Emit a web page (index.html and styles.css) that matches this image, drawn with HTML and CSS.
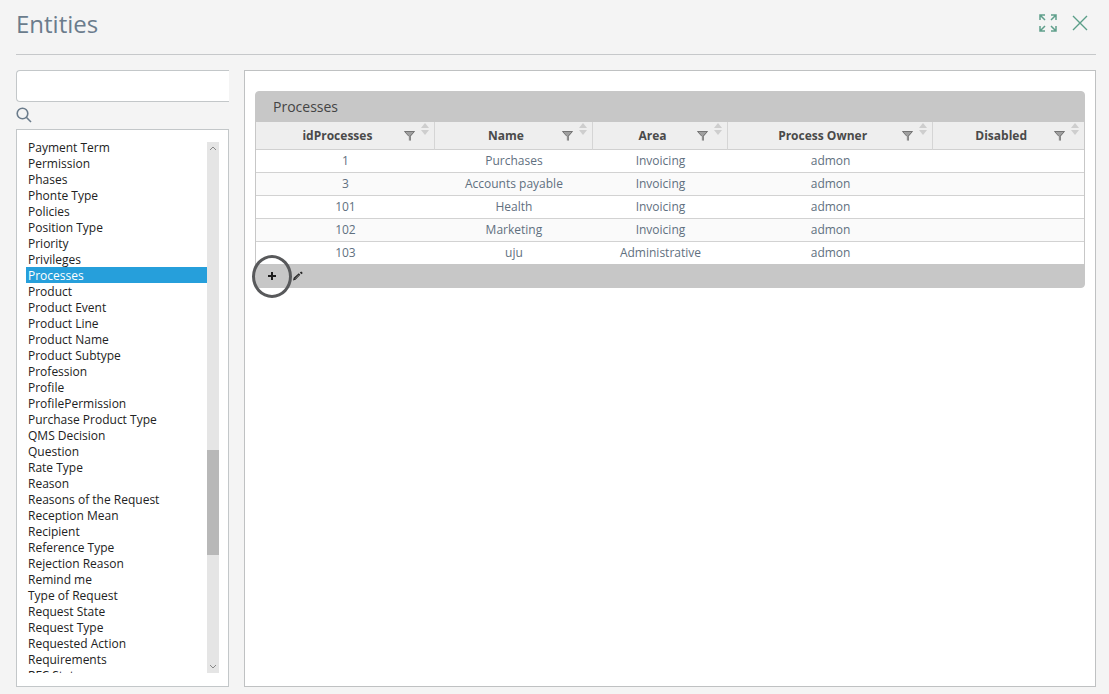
FILE: index.html
```html
<!DOCTYPE html>
<html lang="en">
<head>
<meta charset="utf-8">
<title>Entities</title>
<link rel="stylesheet" href="styles.css">
</head>
<body>
<svg class="sprite" aria-hidden="true">
  <symbol id="funnel" viewBox="0 0 11 10"><path d="M.5.5h10L6.8 5.2V9.5H4.8V5.2z" fill="#a0a0a0"/><path d="M.5.5h10L6.2 5.2V9.5M.5.5l4.300 4.700" fill="none" stroke="#6c6c6c" stroke-width=".9"/></symbol>
  <symbol id="sort" viewBox="0 0 8 12"><path d="M4 0l4 5H0zM4 12l4-5H0z" fill="#cecece"/></symbol>
</svg>
<header class="header">
  <h1 class="title">Entities</h1>
  <div class="actions">
    <button class="icon-button" type="button" aria-label="Expand">
      <svg width="18" height="18" viewBox="0 0 18 18" fill="none" stroke="#5f9f8b" stroke-width="1.5"><path d="M1 6V1h5M1 1l5 5M12 1h5v5M17 1l-5 5M1 12v5h5M1 17l5-5M12 17h5v-5M17 17l-5-5"/></svg>
    </button>
    <button class="icon-button" type="button" aria-label="Close">
      <svg width="16" height="16" viewBox="0 0 16 16" fill="none" stroke="#5a9e88" stroke-width="1.4"><path d="M1 1l14 14M15 1L1 15"/></svg>
    </button>
  </div>
</header>
<main class="layout">
  <aside class="sidebar">
    <input class="search" type="text" aria-label="Search entities">
    <button class="search-button" type="button" aria-label="Search">
      <svg width="16" height="16" viewBox="0 0 16 16" fill="none" stroke="#6b7c8c" stroke-width="1.6"><circle cx="6.500" cy="6.500" r="5.300"/><path d="M10.300 10.300l4.700 4.700"/></svg>
    </button>
    <div class="list-box">
      <select class="entity-list" size="33" aria-label="Entities">
        <option>Payment Term</option>
        <option>Permission</option>
        <option>Phases</option>
        <option>Phonte Type</option>
        <option>Policies</option>
        <option>Position Type</option>
        <option>Priority</option>
        <option>Privileges</option>
        <option selected>Processes</option>
        <option>Product</option>
        <option>Product Event</option>
        <option>Product Line</option>
        <option>Product Name</option>
        <option>Product Subtype</option>
        <option>Profession</option>
        <option>Profile</option>
        <option>ProfilePermission</option>
        <option>Purchase Product Type</option>
        <option>QMS Decision</option>
        <option>Question</option>
        <option>Rate Type</option>
        <option>Reason</option>
        <option>Reasons of the Request</option>
        <option>Reception Mean</option>
        <option>Recipient</option>
        <option>Reference Type</option>
        <option>Rejection Reason</option>
        <option>Remind me</option>
        <option>Type of Request</option>
        <option>Request State</option>
        <option>Request Type</option>
        <option>Requested Action</option>
        <option>Requirements</option>
        <option>RFC State</option>
      </select>
      <div class="scrollbar" aria-hidden="true">
        <svg class="arrow" viewBox="0 0 12 12"><path d="M3 8l3-3 3 3"/></svg>
        <div class="track"><div class="thumb"></div></div>
        <svg class="arrow" viewBox="0 0 12 12"><path d="M3 4l3 3 3-3"/></svg>
      </div>
    </div>
  </aside>
  <section class="content">
    <div class="panel">
      <h2 class="panel-title">Processes</h2>
      <table class="grid">
        <colgroup><col class="col-id"><col class="col-name"><col class="col-area"><col class="col-owner"><col class="col-disabled"></colgroup>
        <thead>
          <tr>
            <th><div class="head"><span class="label">idProcesses</span><svg class="funnel"><use href="#funnel"/></svg><svg class="sort"><use href="#sort"/></svg></div></th>
            <th><div class="head"><span class="label">Name</span><svg class="funnel"><use href="#funnel"/></svg><svg class="sort"><use href="#sort"/></svg></div></th>
            <th><div class="head"><span class="label">Area</span><svg class="funnel"><use href="#funnel"/></svg><svg class="sort"><use href="#sort"/></svg></div></th>
            <th><div class="head"><span class="label">Process Owner</span><svg class="funnel"><use href="#funnel"/></svg><svg class="sort"><use href="#sort"/></svg></div></th>
            <th><div class="head"><span class="label">Disabled</span><svg class="funnel"><use href="#funnel"/></svg><svg class="sort"><use href="#sort"/></svg></div></th>
          </tr>
        </thead>
        <tbody>
          <tr><td>1</td><td>Purchases</td><td>Invoicing</td><td>admon</td><td></td></tr>
          <tr><td>3</td><td>Accounts payable</td><td>Invoicing</td><td>admon</td><td></td></tr>
          <tr><td>101</td><td>Health</td><td>Invoicing</td><td>admon</td><td></td></tr>
          <tr><td>102</td><td>Marketing</td><td>Invoicing</td><td>admon</td><td></td></tr>
          <tr><td>103</td><td>uju</td><td>Administrative</td><td>admon</td><td></td></tr>
        </tbody>
      </table>
      <div class="toolbar">
        <button class="tool tool-add" type="button" aria-label="Add">
          <svg width="10" height="10" viewBox="0 0 10 10" fill="none" stroke="#1c1c1c" stroke-width="2"><path d="M5 1v8M1 5h8"/></svg>
          <span class="ring"></span>
        </button>
        <button class="tool" type="button" aria-label="Edit">
          <svg width="10" height="10" viewBox="0 0 10 10" fill="#262626"><path d="M0 9.500l.7-2.700L5.800 2.200l1.500 1.500L2.500 8.800zM6.800 1.600L8.300.4l1.500 1.500-1.400 1.300z"/><path d="M2 7.800l4-4" stroke="#a8a8a8" stroke-width=".6"/></svg>
        </button>
      </div>
    </div>
  </section>
</main>
</body>
</html>
```
FILE: styles.css
```css
* { box-sizing: border-box; }

body {
  margin: 0;
  min-height: 100vh;
  padding: 0 13px 7px 16px;
  display: flex;
  flex-direction: column;
  background: #f4f4f4;
  font-family: "Open Sans", "Noto Sans", sans-serif;
  font-size: 12px;
  color: #5f7080;
}

button {
  padding: 0;
  border: 0;
  background: none;
  display: flex;
  align-items: center;
  justify-content: center;
}

.sprite { display: none; }

.header {
  height: 55px;
  padding: 0 8px 8px 0;
  display: flex;
  align-items: center;
  justify-content: space-between;
  border-bottom: 1px solid #c6c8ca;
}

.title {
  margin: 0;
  padding-top: 2px;
  font-size: 24px;
  line-height: 32px;
  font-weight: 400;
  color: #6b7c8c;
}

.actions { display: flex; align-items: center; gap: 15px; }

.layout {
  flex: 1;
  padding-top: 15px;
  display: flex;
  gap: 15px;
}

.sidebar {
  width: 213px;
  flex: none;
  display: flex;
  flex-direction: column;
}

.search {
  width: 100%;
  height: 32px;
  padding: 0 8px;
  border: 1px solid #c3c7c9;
  border-right: 0;
  border-radius: 4px 0 0 4px;
  background: #fff;
  font: inherit;
}

.search-button { width: 16px; height: 16px; margin: 5px 0 6px; }

.list-box {
  flex: 1;
  padding: 9px;
  display: flex;
  border: 1px solid #c3c7c9;
  background: #fff;
}

.entity-list {
  flex: 1;
  height: 534px;
  padding: 0;
  border: 0;
  border-radius: 0;
  outline: 0;
  overflow: hidden;
  background: #fff;
  font: inherit;
  color: #222;
  scrollbar-width: none;
}

.entity-list option {
  min-height: 16px;
  height: 16px;
  padding: 0 2px;
  line-height: 16px;
}

.entity-list option:checked {
  background: #269fdb linear-gradient(#269fdb, #269fdb);
  color: #fff;
  -webkit-text-fill-color: #fff;
}

.scrollbar {
  width: 12px;
  margin: 3px 0 4px;
  display: flex;
  flex-direction: column;
  background: #e5e5e5;
}

.arrow {
  width: 12px;
  height: 12px;
  fill: none;
  stroke: #888;
}

.track {
  flex: 1;
  display: flex;
  flex-direction: column;
  padding-top: 296px;
}

.thumb { height: 105px; background: #b8b8b8; }

.content {
  flex: 1;
  min-width: 0;
  padding: 20px 10px;
  border: 1px solid #bfc1c2;
  background: #fff;
}

.panel {
  border: 1px solid #c7c7c7;
  border-radius: 4px;
  background: #c7c7c7;
}

.panel-title {
  margin: 0;
  padding: 0 17px;
  font-size: 14px;
  line-height: 30px;
  font-weight: 400;
  color: #444;
}

.grid {
  width: 100%;
  table-layout: fixed;
  border-collapse: separate;
  border-spacing: 0;
}

.col-id { width: 21.6%; }
.col-name { width: 19.1%; }
.col-area { width: 16.3%; }
.col-owner { width: 24.8%; }
.col-disabled { width: 18.2%; }

.grid th {
  height: 28px;
  padding: 0 5px 0 15px;
  border-right: 1px solid #d5d5d5;
  border-bottom: 1px solid #d0d0d0;
  background: #eee;
  color: #4a4a4a;
}

.grid th:last-child { border-right: 0; }

.head { display: flex; align-items: center; gap: 6px; }
.label { flex: 1; margin-right: -6px; line-height: 18px; }
.funnel { width: 11px; height: 10px; }
.sort { width: 8px; height: 12px; align-self: flex-start; margin-top: -4px; }

.grid td {
  height: 23px;
  padding: 0;
  border-bottom: 1px solid #d2d2d2;
  background: #fff;
  text-align: center;
  line-height: 18px;
}

.grid tbody tr:nth-child(even) td { background: #fafafa; }
.grid tbody tr:last-child td { border-bottom-color: #c7c7c7; }

.toolbar {
  height: 22px;
  padding-left: 10px;
  display: flex;
  align-items: center;
  gap: 15px;
}

.tool { width: 11px; height: 22px; }
.tool-add { position: relative; }

.ring {
  position: absolute;
  top: -10px;
  left: -14px;
  width: 40px;
  height: 43px;
  border: 3px solid #58595b;
  border-radius: 50%;
}
```
